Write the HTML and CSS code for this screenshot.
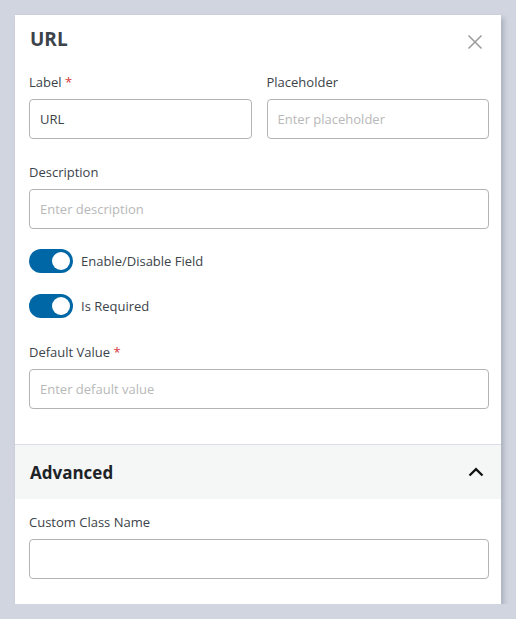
FILE: index.html
```html
<!DOCTYPE html>
<html lang="en">
<head>
<meta charset="utf-8">
<title>URL field settings</title>
<link rel="stylesheet" href="styles.css">
</head>
<body>
<div class="card">
  <div class="body">
    <div class="header">
      <h2 class="title">URL</h2>
      <button class="close" aria-label="Close">
        <svg width="16" height="16" viewBox="0 0 16 16"><path d="M1.5 1.5L14.5 14.5M14.5 1.5L1.5 14.5" stroke="#9a9a9a" stroke-width="1.5" fill="none"/></svg>
      </button>
    </div>
    <div class="row">
      <div class="field">
        <label class="label">Label <span class="req">*</span></label>
        <div class="input">URL</div>
      </div>
      <div class="field">
        <label class="label">Placeholder</label>
        <div class="input ph">Enter placeholder</div>
      </div>
    </div>
    <div class="field">
      <label class="label">Description</label>
      <div class="input ph">Enter description</div>
    </div>
    <div class="toggles">
      <div class="toggle-row"><span class="switch"><span class="knob"></span></span><span class="tlabel">Enable/Disable Field</span></div>
      <div class="toggle-row"><span class="switch"><span class="knob"></span></span><span class="tlabel">Is Required</span></div>
    </div>
    <div class="field">
      <label class="label">Default Value <span class="req">*</span></label>
      <div class="input ph">Enter default value</div>
    </div>
  </div>
  <div class="adv-head">
    <span class="adv-title">Advanced</span>
    <svg class="chev" width="16" height="10" viewBox="0 0 16 10"><path d="M1.5 8.5L8 2.2L14.5 8.5" stroke="#111" stroke-width="2.3" fill="none"/></svg>
  </div>
  <div class="adv-body">
    <div class="field">
      <label class="label">Custom Class Name</label>
      <div class="input"></div>
    </div>
  </div>
</div>
</body>
</html>
```

FILE: styles.css
```css
* { box-sizing: border-box; }
body {
  margin: 0;
  background: #d0d5e0;
  font-family: "Open Sans", "Noto Sans", sans-serif;
  font-size: 13px;
  color: #3c434a;
}
.card {
  margin: 15px 0 0 15px;
  width: 486px;
  background: #fff;
  box-shadow: 3px 3px 5px rgba(40, 50, 70, 0.22);
}
.body {
  padding: 12px 12px 35px 14px;
  display: flex;
  flex-direction: column;
  gap: 23px;
}
.header {
  display: flex;
  justify-content: space-between;
  align-items: center;
  height: 24px;
  margin-bottom: -2px;
}
.title {
  margin: 0;
  font-size: 19px;
  line-height: 24px;
  font-weight: 700;
  color: #3c434a;
  padding-left: 1px;
}
.close {
  border: 0;
  background: none;
  padding: 0;
  width: 16px;
  height: 16px;
  margin-right: 6px;
  margin-top: 6px;
  display: flex;
}
.row {
  display: grid;
  grid-template-columns: 1fr 1fr;
  gap: 15px;
}
.field {
  display: flex;
  flex-direction: column;
  gap: 7px;
}
.label {
  line-height: 20px;
  color: #3c434a;
}
.req { color: #d63638; }
.input {
  height: 40px;
  border: 1px solid #b4b4b4;
  border-radius: 4px;
  padding: 0 10px;
  display: flex;
  align-items: center;
  color: #3c434a;
}
.input.ph { color: #b8b8b8; }
.toggles {
  display: flex;
  flex-direction: column;
  gap: 21px;
  margin-top: -3px;
  margin-bottom: 1px;
}
.toggle-row {
  display: flex;
  align-items: center;
  gap: 8px;
  height: 24px;
}
.switch {
  width: 44px;
  height: 24px;
  border-radius: 12px;
  background: #0067a6;
  display: flex;
  align-items: center;
  justify-content: flex-end;
  padding-right: 3px;
}
.knob {
  width: 18px;
  height: 18px;
  border-radius: 50%;
  background: #fff;
}
.adv-head {
  border-top: 1px solid #dcdcec;
  background: #f5f6f6;
  height: 55px;
  display: flex;
  align-items: center;
  justify-content: space-between;
  padding: 0 17px 0 15px;
}
.adv-title {
  font-size: 17px;
  font-weight: 700;
  color: #1d2327;
}
.adv-body {
  padding: 13px 12px 25px 14px;
}
```
